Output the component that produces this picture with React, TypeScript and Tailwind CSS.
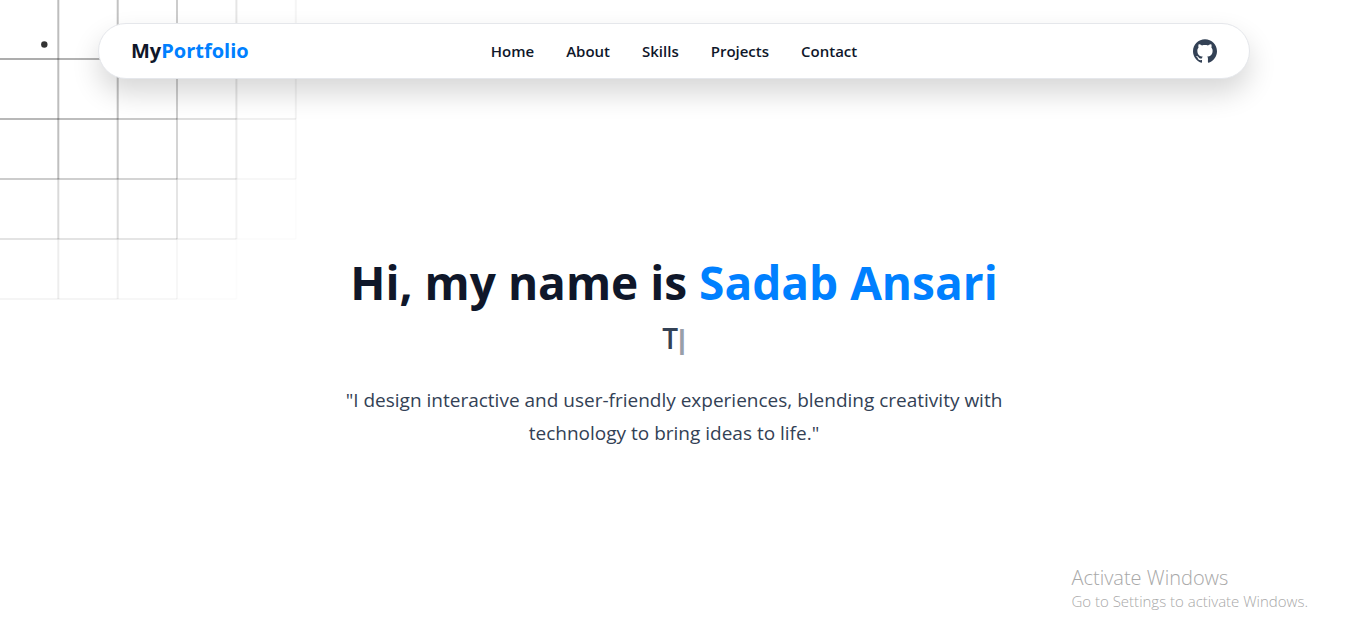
type Segment = [number, number, number];

const columns = [58.3, 117.7, 177, 236.4, 295.8];
const rows = [59, 119, 179, 239, 299];

const columnShade = [
  [0.26, 0.24, 0.2, 0.1, 0.04],
  [0.26, 0.25, 0.2, 0.1, 0.05],
  [0.25, 0.22, 0.17, 0.08, 0.03],
  [0.15, 0.14, 0.1, 0.05, 0.01],
  [0.07, 0.06, 0.03, 0.01, 0],
];

const rowShade = [
  [0.32, 0.3, 0.26, 0.14, 0.06],
  [0.28, 0.26, 0.21, 0.13, 0.06],
  [0.2, 0.19, 0.17, 0.09, 0.03],
  [0.11, 0.11, 0.1, 0.05, 0.01],
  [0.04, 0.04, 0.03, 0.01, 0],
];

const toSegments = (shades: number[][]): Segment[] =>
  shades.flatMap((row, r) => row.map((o, c): Segment => [r, c, o]));

const verticals = toSegments(columnShade);
const horizontals = toSegments(rowShade);

function GridBackdrop() {
  return (
    <svg
      aria-hidden="true"
      className="pointer-events-none absolute left-0 top-0"
      width="300"
      height="302"
    >
      {verticals.map(([r, c, o]) => (
        <rect
          key={`v${r}-${c}`}
          x={columns[c] - 1}
          y={r === 0 ? 0 : rows[r - 1]}
          width="2"
          height={r === 0 ? 59 : 60}
          fill="#000"
          fillOpacity={o}
        />
      ))}
      {horizontals.map(([r, c, o]) => (
        <rect
          key={`h${r}-${c}`}
          x={c === 0 ? 0 : columns[c - 1]}
          y={rows[r] - 1}
          width={c === 0 ? columns[0] : columns[c] - columns[c - 1]}
          height="2"
          fill="#000"
          fillOpacity={o}
        />
      ))}
      <circle cx="44.3" cy="44.5" r="3.2" fill="#333" />
    </svg>
  );
}

function GitHubMark() {
  return (
    <svg
      aria-hidden="true"
      className="size-6"
      viewBox="0 0 24 24"
      fill="currentColor"
    >
      <path d="M12 .297c-6.63 0-12 5.373-12 12 0 5.303 3.438 9.8 8.205 11.385.6.113.82-.258.82-.577 0-.285-.01-1.04-.015-2.04-3.338.724-4.042-1.61-4.042-1.61C4.422 18.07 3.633 17.7 3.633 17.7c-1.087-.744.084-.729.084-.729 1.205.084 1.838 1.236 1.838 1.236 1.07 1.835 2.809 1.305 3.495.998.108-.776.417-1.305.76-1.605-2.665-.3-5.466-1.332-5.466-5.93 0-1.31.465-2.38 1.235-3.22-.135-.303-.54-1.523.105-3.176 0 0 1.005-.322 3.3 1.23.96-.267 1.98-.399 3-.405 1.02.006 2.04.138 3 .405 2.28-1.552 3.285-1.23 3.285-1.23.645 1.653.24 2.873.12 3.176.765.84 1.23 1.91 1.23 3.22 0 4.61-2.805 5.625-5.475 5.92.42.36.81 1.096.81 2.22 0 1.606-.015 2.896-.015 3.286 0 .315.21.69.825.57C20.565 22.092 24 17.592 24 12.297c0-6.627-5.373-12-12-12" />
    </svg>
  );
}

const links = ["Home", "About", "Skills", "Projects", "Contact"];

export default function App() {
  return (
    <div className="relative flex min-h-screen flex-col overflow-hidden bg-white font-['Open_Sans','Noto_Sans',sans-serif] text-[#0f172a]">
      <GridBackdrop />
      <header className="relative px-6 pt-[23px]">
        <nav
          aria-label="Main"
          className="mx-auto grid h-14 max-w-6xl grid-cols-[1fr_auto_1fr] items-center rounded-full border border-gray-200 bg-white px-8 shadow-[0_14px_28px_rgba(0,0,0,0.16)]"
        >
          <a href="#home" className="text-xl font-bold">
            My<span className="text-[#0080ff]">Portfolio</span>
          </a>
          <ul className="flex gap-8 text-[15px] font-semibold">
            {links.map((label) => (
              <li key={label}>
                <a href={`#${label.toLowerCase()}`}>{label}</a>
              </li>
            ))}
          </ul>
          <a
            href="#github"
            aria-label="GitHub"
            className="justify-self-end text-[#334155]"
          >
            <GitHubMark />
          </a>
        </nav>
      </header>

      <main className="relative mx-auto w-full max-w-3xl px-6 pt-[175px] text-center">
        <h1 className="text-[46px] font-bold leading-[56px]">
          Hi, my name is <span className="text-[#0080ff]">Sadab Ansari</span>
        </h1>
        <p className="mt-2 text-[28px] font-semibold leading-10 text-[#334155]">
          T
          <span className="font-['Liberation_Sans',sans-serif] font-bold opacity-50">
            |
          </span>
        </p>
        <p className="mx-auto mt-6 max-w-2xl text-[19px] leading-[33px] text-[#334155]">
          "I design interactive and user-friendly experiences, blending
          creativity with technology to bring ideas to life."
        </p>
      </main>

      <aside className="absolute bottom-8 right-10 font-light text-[#a8a8a8]">
        <p className="text-xl leading-6">Activate Windows</p>
        <p className="text-[15px] leading-[22px]">
          Go to Settings to activate Windows.
        </p>
      </aside>
    </div>
  );
}
